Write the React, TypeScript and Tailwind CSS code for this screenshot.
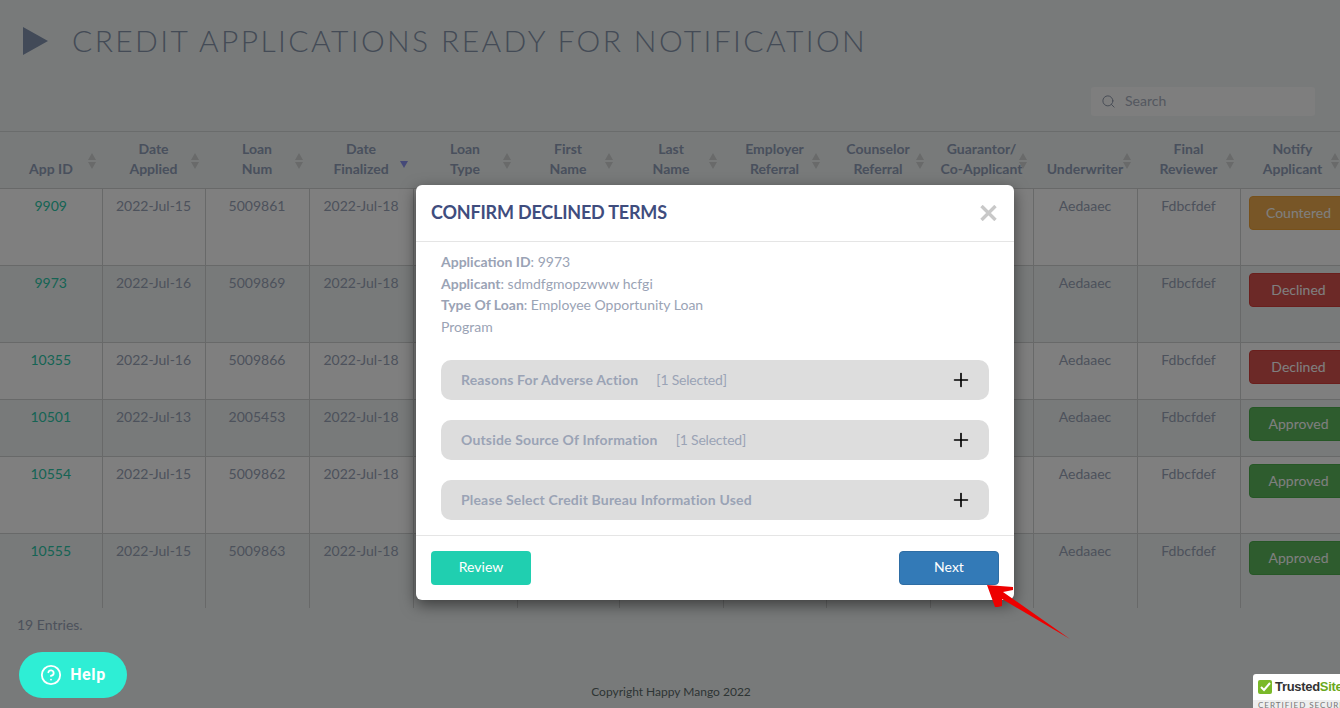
import { CircleHelp, Plus, Search } from 'lucide-react'

type Row = { id: string; applied: string; loan: string; status: string; color: string; height: string; shade: string }

const columns = [
  { label: ['App ID'], width: 'w-[102px]' },
  { label: ['Date', 'Applied'], width: 'w-[103px]' },
  { label: ['Loan', 'Num'], width: 'w-[104px]' },
  { label: ['Date', 'Finalized'], width: 'w-[104px]', sorted: true },
  { label: ['Loan', 'Type'], width: 'w-[104px]' },
  { label: ['First', 'Name'], width: 'w-[102px]' },
  { label: ['Last', 'Name'], width: 'w-[104px]' },
  { label: ['Employer', 'Referral'], width: 'w-[103px]' },
  { label: ['Counselor', 'Referral'], width: 'w-[104px]' },
  { label: ['Guarantor/', 'Co-Applicant'], width: 'w-[103px]' },
  { label: ['Underwriter'], width: 'w-[104px]' },
  { label: ['Final', 'Reviewer'], width: 'w-[103px]' },
  { label: ['Notify', 'Applicant'], width: 'w-[105px]' },
]

const rows: Row[] = [
  { id: '9909', applied: '2022-Jul-15', loan: '5009861', status: 'Countered', color: 'bg-[#f0ad4e] border-[#eea236]', height: 'h-[77px]', shade: 'bg-white' },
  { id: '9973', applied: '2022-Jul-16', loan: '5009869', status: 'Declined', color: 'bg-[#d9534f] border-[#d43f3a]', height: 'h-[77px]', shade: 'bg-[#f0f5f5]' },
  { id: '10355', applied: '2022-Jul-16', loan: '5009866', status: 'Declined', color: 'bg-[#d9534f] border-[#d43f3a]', height: 'h-[57px]', shade: 'bg-white' },
  { id: '10501', applied: '2022-Jul-13', loan: '2005453', status: 'Approved', color: 'bg-[#5cb85c] border-[#4cae4c]', height: 'h-[57px]', shade: 'bg-[#f0f5f5]' },
  { id: '10554', applied: '2022-Jul-15', loan: '5009862', status: 'Approved', color: 'bg-[#5cb85c] border-[#4cae4c]', height: 'h-[77px]', shade: 'bg-white' },
  { id: '10555', applied: '2022-Jul-15', loan: '5009863', status: 'Approved', color: 'bg-[#5cb85c] border-[#4cae4c]', height: 'h-[77px]', shade: 'bg-[#f0f5f5]' },
]

function SortArrows({ sorted }: { sorted?: boolean }) {
  if (sorted) {
    return (
      <svg className="absolute right-[5px] top-[29px]" width="8" height="7" viewBox="0 0 8 7">
        <path d="M0 0h8L4 7z" fill="#8b92f0" />
      </svg>
    )
  }
  return (
    <svg className="absolute right-[5px] top-[21px]" width="10" height="16" viewBox="0 0 10 16">
      <path d="M5 0l4 7H1z M1 9h8l-4 7z" fill="#d2d4d4" />
    </svg>
  )
}

function Accordion({ title, note }: { title: string; note?: string }) {
  return (
    <div className="h-10 rounded-[10px] bg-[#dddddd] pl-5 pr-[17px] flex items-center justify-between text-[#9aa3b5]">
      <div className="flex gap-[18px] text-[14px] pb-px">
        <span className="font-bold tracking-[0.17px]">{title}</span>
        {note && <span className="tracking-[-0.2px]">{note}</span>}
      </div>
      <Plus size={22} strokeWidth={1.8} className="text-black" />
    </div>
  )
}

export default function App() {
  return (
    <div className="relative h-[708px] overflow-hidden bg-[#f0f5f5] font-['Lato','Liberation_Sans',sans-serif] text-[14px] text-[#9aa4b8]">
      <div className="flex items-center pl-[23px] pt-[24px] h-[62px]">
        <svg width="25" height="28" viewBox="0 0 25 28" className="-mt-[5px]">
          <path d="M0 0l25 14L0 28z" fill="#8494b0" />
        </svg>
        <h1 className="ml-[24px] -mt-[6px] text-[30px] font-light tracking-[2.4px] text-[#8896ac] whitespace-nowrap leading-none">
          CREDIT APPLICATIONS READY FOR NOTIFICATION
        </h1>
      </div>
      <div className="flex justify-end pr-[25px] mt-[25px]">
        <div className="w-[224px] h-[29px] bg-[#fcfcfc] rounded-[3px] flex items-center pl-[10px] gap-[9px] text-[#a8b0c0]">
          <Search size={15} strokeWidth={1.5} className="text-[#8a94a8]" />
          <span className="pb-[2px]">Search</span>
        </div>
      </div>
      <div className="mt-[15px] h-[477px] w-[1345px] overflow-hidden">
        <table className="table-fixed border-collapse w-[1345px]">
          <thead>
            <tr className="h-[57px] border-y border-[#d4d8d8]">
              {columns.map((col) => (
                <th key={col.label.join(' ')} className={`${col.width} relative align-middle font-bold leading-5 text-center text-[#92a0ba] px-1 pb-[2px]`}>
                  {col.label.length === 1 ? <div className="pt-5">{col.label[0]}</div> : col.label.map((l) => <div key={l}>{l}</div>)}
                  <SortArrows sorted={col.sorted} />
                </th>
              ))}
            </tr>
          </thead>
          <tbody>
            {rows.map((row) => (
              <tr key={row.id} className={`${row.height} ${row.shade}`}>
                <td className="border border-l-0 border-[#d0d2d2] align-top text-center pt-[7px] leading-5 text-[#2cc8a8]">{row.id}</td>
                <td className="border border-[#d0d2d2] align-top text-center pt-[7px] leading-5">{row.applied}</td>
                <td className="border border-[#d0d2d2] align-top text-center pt-[7px] leading-5">{row.loan}</td>
                <td className="border border-[#d0d2d2] align-top text-center pt-[7px] leading-5">2022-Jul-18</td>
                <td className="border border-[#d0d2d2]" />
                <td className="border border-[#d0d2d2]" />
                <td className="border border-[#d0d2d2]" />
                <td className="border border-[#d0d2d2]" />
                <td className="border border-[#d0d2d2]" />
                <td className="border border-[#d0d2d2]" />
                <td className="border border-[#d0d2d2] align-top text-center pt-[7px] leading-5">Aedaaec</td>
                <td className="border border-[#d0d2d2] align-top text-center pt-[7px] leading-5">Fdbcfdef</td>
                <td className="border border-[#d0d2d2] align-top pt-[7px] pl-2">
                  <div className={`${row.color} w-[100px] h-[34px] border rounded-[4px] text-white flex items-center justify-center pb-px`}>{row.status}</div>
                </td>
              </tr>
            ))}
          </tbody>
        </table>
      </div>
      <div className="pl-[17px] mt-[7px] leading-5">19 Entries.</div>
      <div className="mt-[49px] pl-[2px] text-center text-[12px] leading-4 text-[#5c6a6a]">Copyright Happy Mango 2022</div>

      {/* backdrop */}
      <div className="absolute inset-0 bg-black/50" />

      <div className="absolute left-[416px] top-[185px] w-[598px] h-[415px] bg-white rounded-[6px] shadow-[0_5px_15px_rgba(0,0,0,0.5)] flex flex-col">
        <div className="h-[57px] border-b border-[#e5e5e5] pl-[15px] pr-[17px] pb-[2px] flex items-center justify-between">
          <h2 className="text-[18px] font-bold tracking-[-0.2px] text-[#3f4d7e]">CONFIRM DECLINED TERMS</h2>
          <svg width="17" height="16" viewBox="0 0 17 16" className="mt-[2px]">
            <path d="M1.500 1l14 14M15.500 1l-14 14" stroke="#c8c8c8" strokeWidth="3.4" />
          </svg>
        </div>
        <div className="pl-[25px] pr-[25px] pt-[9px] flex-1">
          <div className="w-[290px] leading-[21.7px] text-[#9aa3b5]">
            <div><b>Application ID</b>: 9973</div>
            <div><b>Applicant</b>: sdmdfgmopzwww hcfgi</div>
            <div><b>Type Of Loan</b>: Employee Opportunity Loan Program</div>
          </div>
          <div className="mt-[22px] flex flex-col gap-5">
            <Accordion title="Reasons For Adverse Action" note="[1 Selected]" />
            <Accordion title="Outside Source Of Information" note="[1 Selected]" />
            <Accordion title="Please Select Credit Bureau Information Used" />
          </div>
        </div>
        <div className="h-[65px] border-t border-[#e5e5e5] px-[15px] pt-[15px] flex justify-between">
          <button className="w-[100px] h-[34px] rounded-[4px] bg-[#20cfb0] text-white pb-[3px]">Review</button>
          <button className="w-[100px] h-[34px] rounded-[4px] bg-[#337ab7] border border-[#2e6da4] text-white pb-[3px]">Next</button>
        </div>
      </div>

      {/* red annotation arrow */}
      <svg className="absolute left-[980px] top-[580px]" width="95" height="65" viewBox="980 580 95 65">
        <path d="M987 585l26 2 0 3-10 2 67 47-68-40 0 7-4 1-3 0z" fill="#ee0000" />
      </svg>

      <div className="absolute left-[19px] top-[652px] w-[108px] h-[46px] rounded-full bg-[#2eeed5] text-white flex items-center justify-center gap-2">
        <CircleHelp size={22} strokeWidth={2} />
        <span className="font-['Roboto',sans-serif] font-bold text-[16px] tracking-[0.6px]">Help</span>
      </div>

      <div className="absolute left-[1253px] top-[674px] w-[90px] h-[34px] bg-white rounded-tl-[3px]">
        <div className="h-[26px] pl-[5px] flex items-center gap-[3px]">
          <div className="w-[14px] h-[14px] rounded-[2px] bg-[#7ab929] flex items-center justify-center">
            <svg width="11" height="10" viewBox="0 0 11 10">
              <path d="M1 5l3 3 6-7" fill="none" stroke="#fff" strokeWidth="2" />
            </svg>
          </div>
          <span className="font-['Liberation_Sans',sans-serif] text-[13px] font-bold tracking-[-0.3px] text-[#333] whitespace-nowrap">Trusted<span className="text-[#6aa820]">Site</span></span>
        </div>
        <div className="h-2 bg-[#eeeeee] pl-[5px] text-[8px] leading-[10px] tracking-[1px] text-[#777] whitespace-nowrap overflow-hidden">CERTIFIED SECURE</div>
      </div>
    </div>
  )
}
